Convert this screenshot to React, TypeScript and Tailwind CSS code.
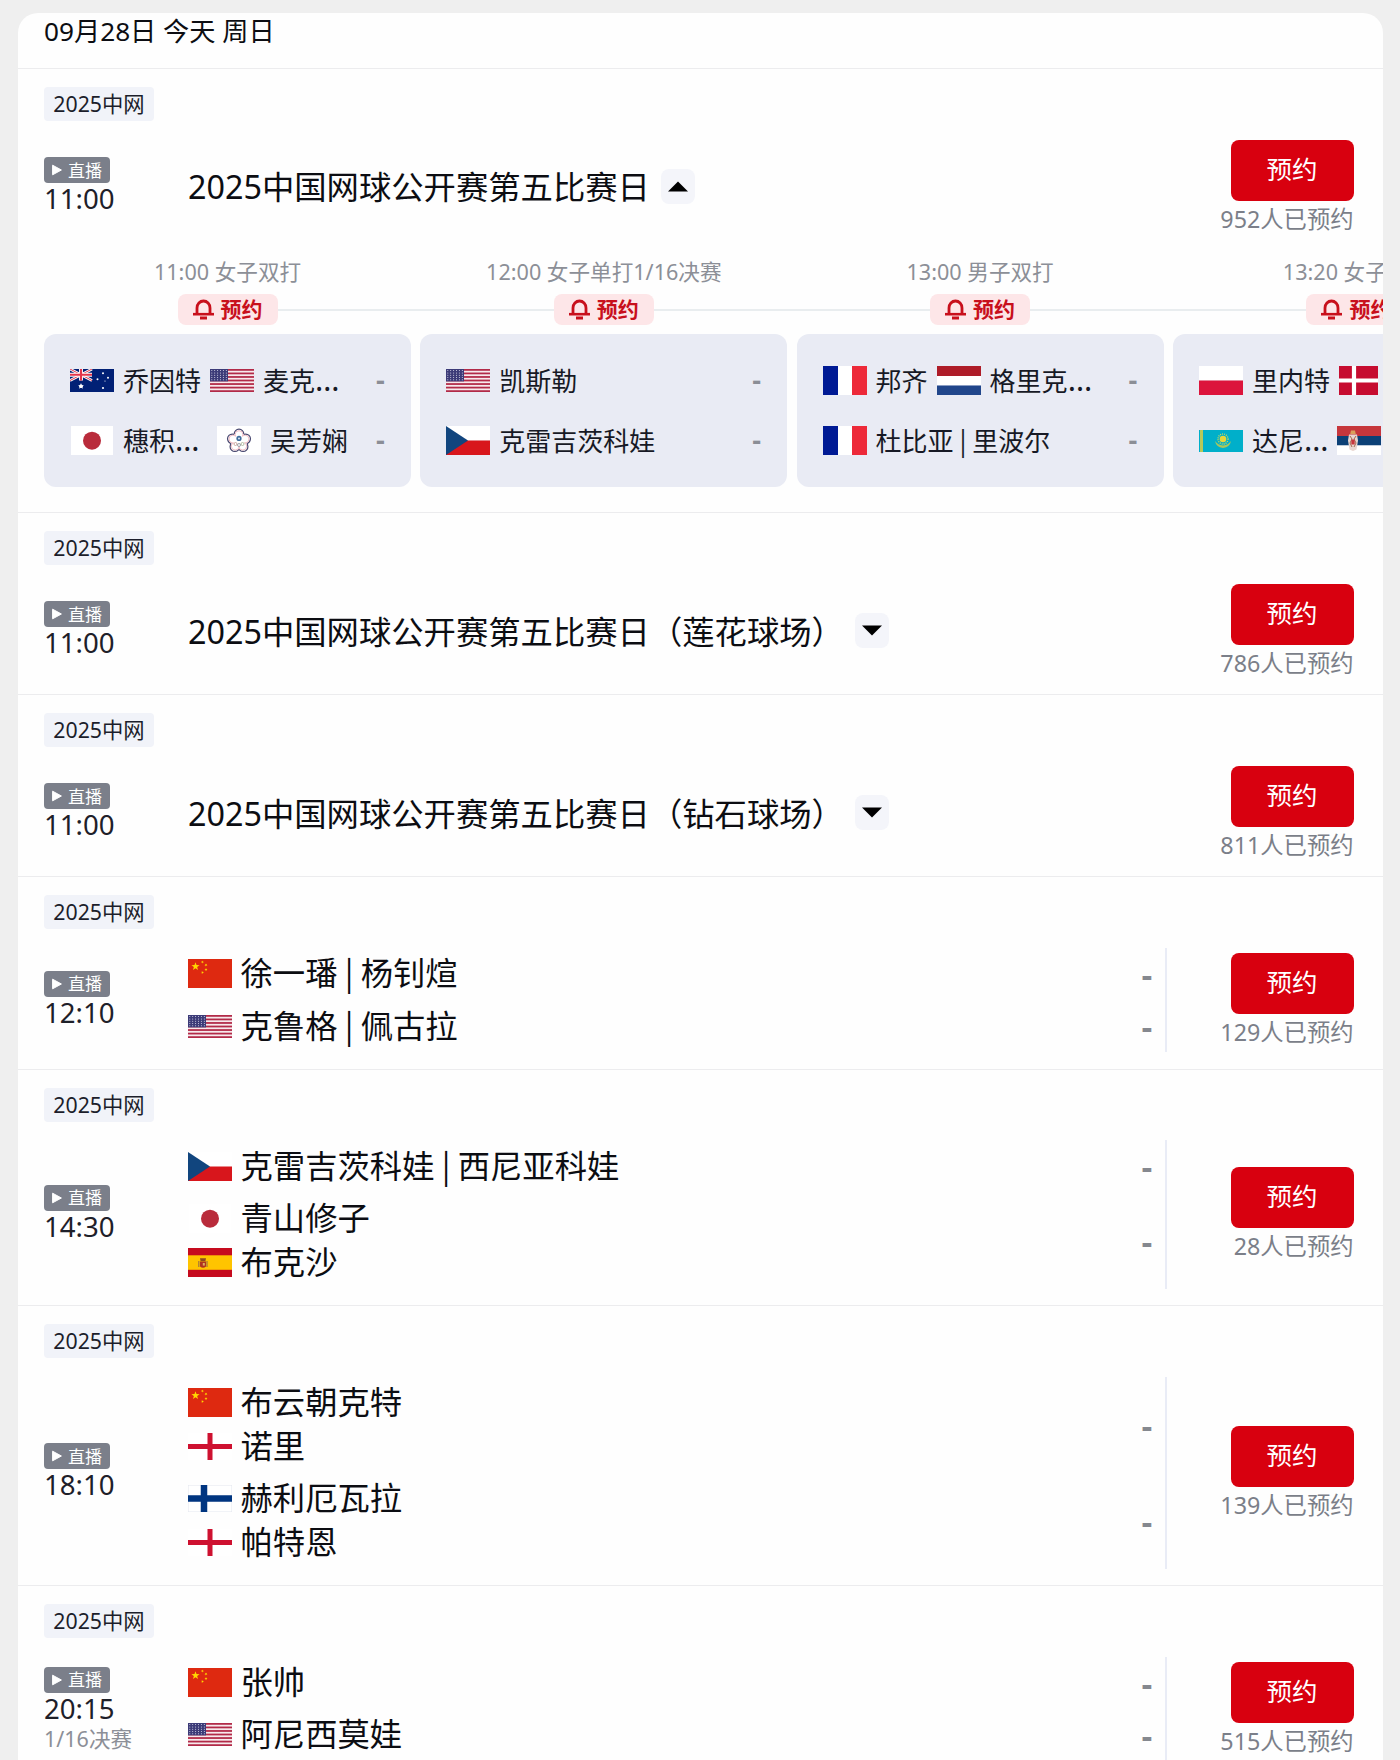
import React from "react";

type Code =
  | "au" | "us" | "jp" | "tpe" | "cz" | "fr" | "nl" | "pl" | "dk" | "kz" | "rs" | "cn" | "es" | "eng" | "fi";

const HEIGHTS: Record<Code, number> = {
  au: 23, us: 23, jp: 29, tpe: 29, cz: 29, fr: 29, nl: 29, pl: 29, dk: 29, kz: 22, rs: 29, cn: 29, es: 29, eng: 27, fi: 27,
};

function star(cx: number, cy: number, r: number, rot = 0) {
  return Array.from({ length: 10 }, (_, i) => {
    const a = ((i * 36 - 90 + rot) * Math.PI) / 180;
    const q = i % 2 ? r * 0.4 : r;
    return `${(cx + q * Math.cos(a)).toFixed(2)},${(cy + q * Math.sin(a)).toFixed(2)}`;
  }).join(" ");
}

function flagArt(code: Code) {
  switch (code) {
    case "au":
      return (
        <>
          <rect width="44" height="23" fill="#012075" />
          <path d="M0 0L22 11.5M22 0L0 11.5" stroke="#fff" strokeWidth="2.6" />
          <path d="M0 0L22 11.5M22 0L0 11.5" stroke="#e4344a" strokeWidth="1" />
          <path d="M11 0V11.5M0 5.75H22" stroke="#fff" strokeWidth="4" />
          <path d="M11 0V11.5M0 5.75H22" stroke="#e4344a" strokeWidth="2.2" />
          <polygon points={star(11, 17.2, 3.2)} fill="#fff" />
          <circle cx="11" cy="17.2" r="1.8" fill="#fff" />
          <circle cx="33" cy="4.2" r="1" fill="#fff" />
          <circle cx="27.5" cy="10.3" r="1" fill="#fff" />
          <circle cx="38" cy="8.8" r="1" fill="#fff" />
          <circle cx="35" cy="12" r=".6" fill="#fff" />
          <circle cx="33" cy="19" r="1.1" fill="#fff" />
        </>
      );
    case "us":
      return (
        <>
          <rect width="44" height="23" fill="#f7e9ec" />
          {[0, 1, 2, 3, 4, 5, 6].map((i) => (
            <rect key={i} y={(i * 2 * 23) / 13} width="44" height={23 / 13} fill="#b22a48" />
          ))}
          <rect width="18" height="12.4" fill="#3c3b78" />
          {[0, 1, 2, 3, 4].map((r) =>
            [0, 1, 2, 3, 4, 5].map((c) => (
              <circle key={`${r}${c}`} cx={1.8 + c * 2.9} cy={1.6 + r * 2.3} r=".5" fill="#e4e4f2" />
            )),
          )}
        </>
      );
    case "jp":
      return (
        <>
          <rect x="1" width="42" height="29" fill="#fff" />
          <circle cx="22" cy="14.7" r="9" fill="#b92b3b" />
        </>
      );
    case "tpe":
      return (
        <>
          <rect width="44" height="29" fill="#fff" />
          {[0, 72, 144, 216, 288].map((a) => (
            <circle
              key={a}
              cx={22 + 7 * Math.sin((a * Math.PI) / 180)}
              cy={15 - 7 * Math.cos((a * Math.PI) / 180)}
              r="4.8"
              fill="#fff"
              stroke="#47476f"
              strokeWidth="1.2"
            />
          ))}
          <circle cx="22" cy="15" r="8.2" fill="#fff" />
          {[0, 72, 144, 216, 288].map((a) => (
            <circle
              key={a}
              cx={22 + 6.4 * Math.sin((a * Math.PI) / 180)}
              cy={15 - 6.4 * Math.cos((a * Math.PI) / 180)}
              r="3.9"
              fill="#fff"
              stroke="#e9a3ae"
              strokeWidth=".7"
            />
          ))}
          <circle cx="22" cy="15" r="5.6" fill="#fff" />
          <circle cx="22" cy="12.4" r="2.6" fill="#3e6b9c" />
          <circle cx="22" cy="12.4" r="1" fill="#dfe8f2" />
          <circle cx="18.5" cy="18" r="1.5" fill="none" stroke="#b98a80" strokeWidth=".7" />
          <circle cx="22" cy="19" r="1.5" fill="none" stroke="#7d7f8c" strokeWidth=".7" />
          <circle cx="25.5" cy="18" r="1.5" fill="none" stroke="#9ba884" strokeWidth=".7" />
        </>
      );
    case "cz":
      return (
        <>
          <rect width="44" height="14.5" fill="#fff" />
          <rect y="14.5" width="44" height="14.5" fill="#d8161c" />
          <path d="M0 0L22 14.5L0 29z" fill="#11457e" />
        </>
      );
    case "fr":
      return (
        <>
          <rect width="15" height="29" fill="#001a94" />
          <rect x="15" width="14" height="29" fill="#fff" />
          <rect x="29" width="15" height="29" fill="#ed2939" />
        </>
      );
    case "nl":
      return (
        <>
          <rect width="44" height="10" fill="#ae1c28" />
          <rect y="10" width="44" height="9.5" fill="#fff" />
          <rect y="19.5" width="44" height="9.5" fill="#21468b" />
        </>
      );
    case "pl":
      return (
        <>
          <rect width="44" height="14.5" fill="#fff" />
          <rect y="14.5" width="44" height="14.5" fill="#dc143c" />
        </>
      );
    case "dk":
      return (
        <>
          <rect width="39" height="29" fill="#c60c30" />
          <path d="M15 0V29M0 14.5H39" stroke="#fff" strokeWidth="4.2" />
        </>
      );
    case "kz":
      return (
        <>
          <rect width="44" height="22" fill="#00afca" />
          <rect x="1" width="3" height="22" fill="#b6c95a" />
          <circle cx="24" cy="9" r="5" fill="none" stroke="#c9d95a" strokeWidth="1.4" strokeDasharray="1 1" />
          <circle cx="24" cy="9" r="3.3" fill="#e8d63a" />
          <path d="M16 11q3 4 8 4.5q5-.5 8-4.5q-1 6-8 7q-7-1-8-7z" fill="#a8c65c" />
        </>
      );
    case "rs":
      return (
        <>
          <rect width="44" height="10" fill="#c6363c" />
          <rect y="10" width="44" height="9.5" fill="#0c4076" />
          <rect y="19.5" width="44" height="9.5" fill="#fff" />
          <path d="M12 8.5h8l1 6-1.5 9L16 25l-3.5-1.5L11 14.5z" fill="#e8d5cf" />
          <path d="M13 10l2 3-2 4 2 4M19 10l-2 3 2 4-2 4" stroke="#a5684f" strokeWidth="1" fill="none" />
          <rect x="14.3" y="13.5" width="3.4" height="5" fill="#c6363c" />
          <path d="M14 4.5h4l.8 3.5h-5.6z" fill="#d9a05c" />
        </>
      );
    case "cn":
      return (
        <>
          <rect width="44" height="29" fill="#de2910" />
          <polygon points={star(7.5, 7.5, 4.3)} fill="#ffd800" />
          <polygon points={star(14.5, 3, 1.6, 20)} fill="#ffd800" />
          <polygon points={star(18, 6, 1.6, 40)} fill="#ffd800" />
          <polygon points={star(18, 10.5, 1.6)} fill="#ffd800" />
          <polygon points={star(14.5, 13.5, 1.6, 20)} fill="#ffd800" />
        </>
      );
    case "es":
      return (
        <>
          <rect width="44" height="29" fill="#c60b1e" />
          <rect y="7.3" width="44" height="14.5" fill="#ffc400" />
          <path d="M10.8 13v6M19 13v6" stroke="#a8793a" strokeWidth="1.3" />
          <path d="M12 13.500h6v5q-3 2.500-6 0z" fill="#b0331f" />
          <path d="M12 10.300h6l-.6 3h-4.800z" fill="#8c4a1f" />
          <rect x="14.800" y="15" width="2" height="2.600" fill="#dcae5e" />
        </>
      );
    case "eng":
      return (
        <>
          <rect width="44" height="27" fill="#fff" />
          <path d="M22 0V27M0 13.5H44" stroke="#ce1130" strokeWidth="5" />
        </>
      );
    case "fi":
      return (
        <>
          <rect x=".25" y=".25" width="43.5" height="26.5" fill="#fff" stroke="#e3e6ee" strokeWidth=".5" />
          <path d="M16 0V27M0 13.5H44" stroke="#003580" strokeWidth="6.5" />
        </>
      );
  }
}

function Flag({ code }: { code: Code }) {
  const h = HEIGHTS[code];
  return (
    <svg className="shrink-0" width="44" height={h} viewBox={`0 0 44 ${h}`} preserveAspectRatio="none">
      {flagArt(code)}
    </svg>
  );
}

/* The divider and the ellipsis take their widths from their own faces. */
function Name({ text }: { text: string }) {
  return (
    <>
      {text.split(/(\s\|\s|…)/).map((part, i) =>
        part === " | " ? (
          <span key={i} className="whitespace-pre leading-[20px] font-['Noto_Sans_CJK_SC',sans-serif]">{part}</span>
        ) : part === "…" ? (
          <span key={i} className="text-[31px] leading-[20px]">{part}</span>
        ) : (
          <React.Fragment key={i}>{part}</React.Fragment>
        ),
      )}
    </>
  );
}

function Tag() {
  return (
    <div className="flex h-[34px] w-[110px] items-center justify-center rounded-[4px] bg-[#f1f3f9] text-[21.3px] text-[#1c1e2b]">
      2025中网
    </div>
  );
}

function LiveTime({ time, note }: { time: string; note?: string }) {
  return (
    <div className="w-[144px] shrink-0">
      <div className="flex h-[26px] w-[66px] items-center rounded-[4px] bg-[#7b7f8a] pl-2 text-[17px] leading-none text-white">
        <svg className="mr-[6px]" width="10" height="12" viewBox="0 0 10 12">
          <path d="M.6 1.2v9.6L9.4 6z" fill="#fff" stroke="#fff" strokeWidth="1" strokeLinejoin="round" />
        </svg>
        直播
      </div>
      <div className="pb-[2px] text-[27.600px] leading-[31px] text-[#1e2029]">{time}</div>
      {note && <div className="text-[21.5px] leading-[25px] text-[#8c8f97]">{note}</div>}
    </div>
  );
}

function Reserve({ count }: { count: number }) {
  return (
    <div className="flex h-[94px] w-[187px] shrink-0 flex-col items-end">
      <button className="h-[61px] w-[123px] rounded-[8px] bg-[#d8000f] pb-[2px] text-[25.5px] leading-[59px] text-white">预约</button>
      <div className="pt-[2px] text-[23.3px] leading-[32px] text-[#7b7f89]">{count}人已预约</div>
    </div>
  );
}

function Section({ children, extra }: { children: React.ReactNode; extra?: React.ReactNode }) {
  return (
    <section className="border-t border-[#ececee] pt-[18px] pb-[16.5px]">
      <div className="px-[26.5px]">
        <Tag />
        <div className="mt-[18.5px] flex items-center pr-[2.5px]">{children}</div>
      </div>
      {extra}
    </section>
  );
}

function TitleRow({ title, open, count }: { title: string; open?: boolean; count: number }) {
  return (
    <>
      <LiveTime time="11:00" />
      <div className="flex flex-1 items-center gap-[11px]">
        <div className="whitespace-nowrap text-[32.35px] text-[#0c0d12]">{title}</div>
        <div className="flex h-[35px] w-[34px] items-center justify-center rounded-[8px] bg-[#f4f5fa]">
          <svg width="20" height="11" viewBox="0 0 20 11">
            <path d={open ? "M10 0.5L20 10.5H0z" : "M10 10.5L0 .5H20z"} fill="#000" />
          </svg>
        </div>
      </div>
      <Reserve count={count} />
    </>
  );
}

type Player = { flag: Code; name: string };

function MatchRow({ time, note, teams, count }: { time: string; note?: string; teams: Player[][]; count: number }) {
  return (
    <>
      <LiveTime time={time} note={note} />
      <div className="flex-1 border-r-2 border-[#e9ecf6]">
        {teams.map((team, i) => (
          <div key={i} className="flex items-center justify-between py-[4.25px] pr-[12px]">
            <div>
              {team.map((p) => (
                <div key={p.name} className="flex h-[43.75px] items-center gap-[8.5px] text-[32.35px] leading-[40px] text-[#0c0d12]">
                  <Flag code={p.flag} />
                  <div className="mb-[3px] h-[40px] whitespace-nowrap"><Name text={p.name} /></div>
                </div>
              ))}
            </div>
            <div className="pt-[2px] font-['Liberation_Sans',sans-serif] text-[34px] leading-[30px] font-bold text-[#85888f]">-</div>
          </div>
        ))}
      </div>
      <Reserve count={count} />
    </>
  );
}

type Side = { flag: Code; name: string; wide?: boolean }[];
const FIXTURES: { label: string; sides: [Side, Side] }[] = [
  {
    label: "11:00 女子双打",
    sides: [
      [{ flag: "au", name: "乔因特" }, { flag: "us", name: "麦克…" }],
      [{ flag: "jp", name: "穗积…", wide: true }, { flag: "tpe", name: "吴芳娴" }],
    ],
  },
  {
    label: "12:00 女子单打1/16决赛",
    sides: [[{ flag: "us", name: "凯斯勒" }], [{ flag: "cz", name: "克雷吉茨科娃" }]],
  },
  {
    label: "13:00 男子双打",
    sides: [
      [{ flag: "fr", name: "邦齐" }, { flag: "nl", name: "格里克…" }],
      [{ flag: "fr", name: "杜比亚 | 里波尔" }],
    ],
  },
  {
    label: "13:20 女子双打",
    sides: [
      [{ flag: "pl", name: "里内特" }, { flag: "dk", name: "" }],
      [{ flag: "kz", name: "达尼…" }, { flag: "rs", name: "" }],
    ],
  },
];

function Bell() {
  return (
    <svg width="21" height="21" viewBox="0 0 21 21" fill="none" stroke="#c8101c">
      <path d="M4 14.5V9a6.5 7 0 0 1 13 0v5.5" strokeWidth="2.8" />
      <path d="M0 15.2H21" strokeWidth="2.6" />
      <path d="M7 19H14" strokeWidth="3" />
    </svg>
  );
}

function Carousel() {
  return (
    <div className="overflow-hidden pt-[24.3px] pb-[8.5px] pl-[26.5px]">
      <div className="relative flex w-[1500px] gap-[9.3px]">
        <div className="absolute top-[51px] right-0 left-[184px] h-[2px] bg-[#e9edef]" />
        {FIXTURES.map((f) => (
          <div key={f.label} className="relative flex w-[367px] shrink-0 flex-col items-center">
            <div className="text-[21.6px] leading-[28px] text-[#8c8f97]">{f.label}</div>
            <div className="mt-[8px] flex h-[31px] w-[100px] items-center justify-center gap-[7px] rounded-[8px] bg-[#fde6e8] text-[21px] font-bold text-[#c8101c]">
              <Bell />
              预约
            </div>
            <div className="mt-[9.5px] flex h-[153px] w-full flex-col justify-center rounded-[12px] bg-[#e9ebf4] px-[26px]">
              {f.sides.map((side, i) => (
                <div key={i} className="flex h-[60.3px] items-center justify-between">
                  <div className="flex items-center">
                    {side.map((p, j) => (
                      <div key={j} className="mr-[9px] flex items-center gap-[9px] text-[26px] leading-[40px] text-[#171925]">
                        <Flag code={p.flag} />
                        <div className={p.wide ? "h-[40px] w-[85px] whitespace-nowrap" : "h-[40px] whitespace-nowrap"}>
                          <Name text={p.name} />
                        </div>
                      </div>
                    ))}
                  </div>
                  <div className="font-['Liberation_Sans',sans-serif] text-[28px] leading-[30px] font-bold text-[#8b8e96]">-</div>
                </div>
              ))}
            </div>
          </div>
        ))}
      </div>
    </div>
  );
}

export default function App() {
  return (
    <div className="h-[1760px] w-[1400px] overflow-hidden bg-[#efefef] px-[17.5px] pt-[13px] font-['Noto_Sans','Noto_Sans_CJK_SC',sans-serif]">
      <main className="h-[1800px] overflow-hidden rounded-t-[20px] bg-[#fefefe]">
        <header className="h-[55px] px-[26.5px] text-[26.2px] leading-[36px] text-[#0c0d12]">09月28日 今天 周日</header>
        <Section extra={<Carousel />}>
          <TitleRow title="2025中国网球公开赛第五比赛日" open count={952} />
        </Section>
        <Section>
          <TitleRow title="2025中国网球公开赛第五比赛日（莲花球场）" count={786} />
        </Section>
        <Section>
          <TitleRow title="2025中国网球公开赛第五比赛日（钻石球场）" count={811} />
        </Section>
        <Section>
          <MatchRow
            time="12:10"
            count={129}
            teams={[[{ flag: "cn", name: "徐一璠 | 杨钊煊" }], [{ flag: "us", name: "克鲁格 | 佩古拉" }]]}
          />
        </Section>
        <Section>
          <MatchRow
            time="14:30"
            count={28}
            teams={[
              [{ flag: "cz", name: "克雷吉茨科娃 | 西尼亚科娃" }],
              [{ flag: "jp", name: "青山修子" }, { flag: "es", name: "布克沙" }],
            ]}
          />
        </Section>
        <Section>
          <MatchRow
            time="18:10"
            count={139}
            teams={[
              [{ flag: "cn", name: "布云朝克特" }, { flag: "eng", name: "诺里" }],
              [{ flag: "fi", name: "赫利厄瓦拉" }, { flag: "eng", name: "帕特恩" }],
            ]}
          />
        </Section>
        <Section>
          <MatchRow
            time="20:15"
            note="1/16决赛"
            count={515}
            teams={[[{ flag: "cn", name: "张帅" }], [{ flag: "us", name: "阿尼西莫娃" }]]}
          />
        </Section>
      </main>
    </div>
  );
}
